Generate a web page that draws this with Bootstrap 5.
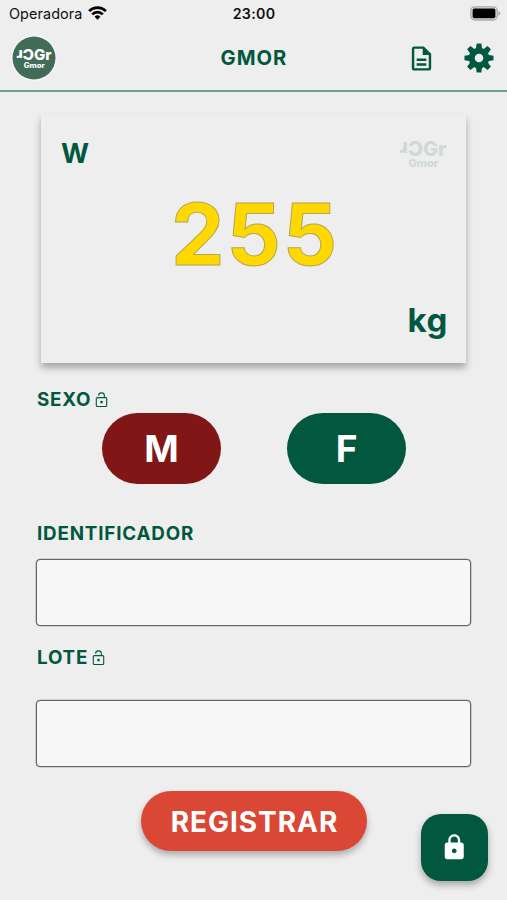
<!DOCTYPE html>
<html lang="pt-BR">
<head>
<meta charset="utf-8">
<meta name="viewport" content="width=device-width, initial-scale=1">
<title>GMOR</title>
<link href="https://cdn.jsdelivr.net/npm/bootstrap@5.3.0/dist/css/bootstrap.min.css" rel="stylesheet">
<style>
:root{--green:#02583f}
body{font-family:Inter,"Liberation Sans",sans-serif;background:#eee;color:#111;height:900px;overflow:hidden}
.green{color:var(--green)}
svg{display:block;flex:none}
.statusbar{height:28px;padding:0 6px 0 9px;display:grid;grid-template-columns:1fr auto 1fr;align-items:center;line-height:1}
.carrier{font-size:14.4px;letter-spacing:.1px}
.clock{font-size:14.2px;font-weight:600;letter-spacing:.3px;margin-right:2px}
.wifi{margin:-3px 0 0 1px}
.battery{margin-top:-2px}
.topbar{height:64px;padding:0 14px 2px 11px;display:grid;grid-template-columns:1fr auto 1fr;align-items:center;border-bottom:2px solid #6b9f8b}
.title{font-size:20.2px;font-weight:700;letter-spacing:1px;line-height:1;padding:1px 0 0 4px}
.tools{gap:28px;margin-right:-1px}
.scale{margin:22px 41px 0;height:249px;padding:0 20px;box-shadow:0 5px 7px rgba(0,0,0,.3);background:#eee;border-radius:0}
.scale-head{height:78px;line-height:1}
.w-label{font-size:27px;font-weight:700;padding-top:26px}
.reading{font-size:85px;font-weight:750;line-height:86px;height:87px;color:#ffd800;letter-spacing:2px;padding-left:3px;-webkit-text-stroke:1px #b3a850}
.unit{font-size:33px;font-weight:700;line-height:40px;margin-top:21px;letter-spacing:.6px;margin-right:-2px}
.watermark{margin:23px -2px 0 0;overflow:visible}
.form-area{padding:0 36px}
.field-label{font-size:18.8px;font-weight:700;letter-spacing:.82px;line-height:24px;height:24px;margin:0;padding-left:1px}
.lock-state{margin:-1px 0 0 4px}
.sexes{padding:0 65px 0 66px;height:71px;margin-top:1px}
.sex{width:119px;height:71px;font-size:37px;font-weight:700;line-height:1;color:#fff;border:0}
.male,.male:hover{background:#811616;color:#fff}
.female,.female:hover{background:var(--green);color:#fff}
.entry{height:67px;background:#f7f7f7;border:1px solid #666;border-radius:4px;box-shadow:0 0 0 .3px #777}
.register,.register:hover{width:226px;height:60px;background:#da4735;color:#fff;border:0;font-size:28px;font-weight:700;letter-spacing:.95px;line-height:1;padding:2px 0 0 2px;box-shadow:0 4px 6px rgba(0,0,0,.28)}
.fab,.fab:hover{position:fixed;right:19px;bottom:19px;width:67px;height:67px;border:0;border-radius:20px;background:var(--green);box-shadow:0 4px 7px rgba(0,0,0,.3)}
.gap-before-sexo{margin-top:25px}
.gap-before-ident{margin-top:38px}
.gap-ident{margin-top:13px}
.gap-before-lote{margin-top:20px}
.gap-lote{margin-top:30px}
.gap-register{margin-top:24px}
</style>
</head>
<body>
<svg width="0" height="0" class="position-absolute" aria-hidden="true">
  <symbol id="lock-open" viewBox="0 0 12 16"><g fill="none" stroke="currentColor" stroke-width="1.1"><rect x=".8" y="5.6" width="10.4" height="8.9" rx="1"/><path d="M3.1 3.7C3.1 2 4.2.9 6 .9S8.9 2.1 8.9 3.7v1.9"/></g><circle cx="6" cy="10.1" r="1.3" fill="currentColor"/></symbol>
</svg>
<div class="statusbar">
  <div class="d-flex align-items-center gap-1"><span class="carrier">Operadora</span>
    <svg class="wifi" width="19" height="14" viewBox="0 0 19 14"><g fill="none" stroke="#000" stroke-width="2.7"><path d="M1.1 5.1a11.9 11.9 0 0 1 16.8 0"/><path d="M4.2 8.4a7.5 7.5 0 0 1 10.6 0"/></g><path d="M9.5 13.7 6.6 10.8a4.1 4.1 0 0 1 5.8 0z"/></svg>
  </div>
  <span class="clock">23:00</span>
  <svg class="ms-auto battery" width="31" height="15" viewBox="0 0 31 15"><rect x=".8" y=".8" width="26.4" height="13.2" rx="4" fill="#ddd" stroke="#aaa" stroke-width="1.3"/><rect x="2.6" y="2.6" width="22.8" height="9.6" rx="1.8"/><path d="M28.4 5.1q2 1 2 2.3t-2 2.3z" fill="#aaa"/></svg>
</div>
<header class="topbar green">
  <svg width="46" height="46" viewBox="0 0 46 46"><circle cx="23" cy="23" r="22.7" fill="#fafafa"/><circle cx="23" cy="23" r="21.5" fill="#426c58"/>
    <g fill="#fff" font-family="Inter,sans-serif" font-weight="800"><text x="5.5" y="22.5" font-size="14.5" textLength="35" lengthAdjust="spacingAndGlyphs">ɹ<tspan dy="2">ƆGr</tspan></text><text x="23.2" y="32.5" font-size="7.2" text-anchor="middle" textLength="21" lengthAdjust="spacingAndGlyphs">Gmor</text></g>
  </svg>
  <h1 class="title m-0">GMOR</h1>
  <div class="tools d-flex justify-content-end align-items-center">
    <svg width="29" height="29" viewBox="0 0 24 24" fill="currentColor"><path d="M8 16h8v2H8zm0-4h8v2H8zm6-10H6c-1.1 0-2 .9-2 2v16c0 1.1.89 2 1.99 2H18c1.1 0 2-.9 2-2V8l-6-6zm4 18H6V4h7v5h5v11z"/></svg>
    <svg width="30" height="30" viewBox="-15 -15 30 30" fill="currentColor"><circle r="7.3" fill="none" stroke="currentColor" stroke-width="6"/>
      <g id="teeth"><path id="tooth" d="M-3.3-8.5-2.3-14.5H2.3L3.3-8.5z"/><use href="#tooth" transform="rotate(45)"/><use href="#tooth" transform="rotate(90)"/><use href="#tooth" transform="rotate(135)"/></g><use href="#teeth" transform="rotate(180)"/></svg>
  </div>
</header>
<main>
  <section class="scale card border-0 green">
    <div class="scale-head d-flex justify-content-between">
      <span class="w-label">W</span>
      <svg class="watermark" width="50" height="34" viewBox="0 0 50 34"><g fill="#d0d9d5" font-family="Inter,sans-serif" font-weight="800"><text x="1.5" y="15.5" font-size="20" textLength="47" lengthAdjust="spacingAndGlyphs">ɹ<tspan dy="3">ƆGr</tspan></text><text x="25.5" y="29.5" font-size="10.5" text-anchor="middle" textLength="30" lengthAdjust="spacingAndGlyphs">Gmor</text></g></svg>
    </div>
    <div class="reading text-center">255</div>
    <div class="unit text-end">kg</div>
  </section>
  <section class="form-area">
    <div class="field-label gap-before-sexo green d-flex align-items-center">SEXO<svg class="lock-state" width="13" height="16"><use href="#lock-open"/></svg></div>
    <div class="sexes d-flex justify-content-between">
      <button class="btn rounded-pill sex male">M</button>
      <button class="btn rounded-pill sex female">F</button>
    </div>
    <label class="field-label gap-before-ident green d-block" for="ident">IDENTIFICADOR</label>
    <input id="ident" class="form-control entry gap-ident">
    <label class="field-label gap-before-lote green d-flex align-items-center" for="lote">LOTE<svg class="lock-state" width="13" height="16"><use href="#lock-open"/></svg></label>
    <input id="lote" class="form-control entry gap-lote">
    <div class="text-center gap-register"><button class="btn rounded-pill register">REGISTRAR</button></div>
  </section>
</main>
<button class="btn fab d-flex align-items-center justify-content-center text-white p-0" aria-label="Bloquear">
  <svg width="28.5" height="28.5" viewBox="0 0 24 24" fill="currentColor"><path d="M18 8h-1V6c0-2.76-2.24-5-5-5S7 3.24 7 6v2H6c-1.1 0-2 .9-2 2v10c0 1.1.9 2 2 2h12c1.1 0 2-.9 2-2V10c0-1.1-.9-2-2-2zm-6 9c-1.1 0-2-.9-2-2s.9-2 2-2 2 .9 2 2-.9 2-2 2zm3.1-9H8.9V6c0-1.71 1.39-3.1 3.1-3.1 1.71 0 3.1 1.39 3.1 3.1v2z"/></svg>
</button>
<script src="https://cdn.jsdelivr.net/npm/bootstrap@5.3.0/dist/js/bootstrap.bundle.min.js"></script>
</body>
</html>
